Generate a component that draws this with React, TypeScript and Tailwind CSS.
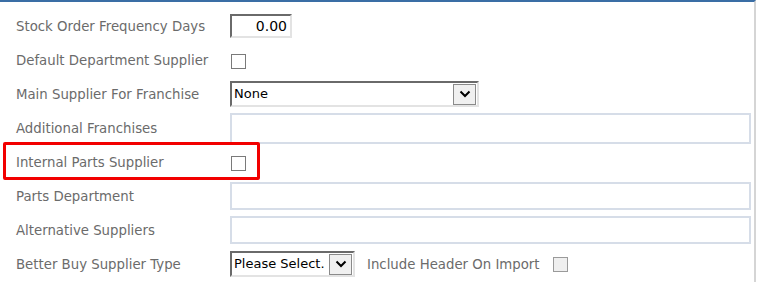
import React from 'react'

const font = { fontFamily: 'Tahoma, "DejaVu Sans", Verdana, sans-serif' }

function Label({ children }: { children: React.ReactNode }) {
    return <div className="w-[214px] shrink-0 pt-[2px] text-[13.3px] text-[#6b6b6b]">{children}</div>
}

function Check({ disabled }: { disabled?: boolean }) {
    return (
        <div className={`w-[15px] h-[15px] border ${disabled ? 'bg-[#efefef] border-[#9a9a9a]' : 'bg-white border-[#7a7a7a]'}`} />
    )
}

function Chevron() {
    return (
        <svg width="12" height="8" viewBox="0 0 12 8">
            <path d="M1.5 1.5 L6 6 L10.5 1.5" fill="none" stroke="#000" strokeWidth="2" />
        </svg>
    )
}

function Select({ value, width }: { value: string; width: string }) {
    return (
        <div className={`${width} h-[26px] flex items-center border-2 border-t-[#6a6a6a] border-l-[#6a6a6a] border-r-[#e3e3e3] border-b-[#e3e3e3] bg-white`}>
            <span className="flex-1 pl-[2px] text-[13px] text-black whitespace-nowrap overflow-hidden">{value}</span>
            <div className="w-[23px] h-[21px] shrink-0 mr-[1px] flex items-center justify-center border border-[#8a8a8a] bg-[#f0f0f0]">
                <Chevron />
            </div>
        </div>
    )
}

function TextBox({ h }: { h: string }) {
    return <div className={`w-[521px] ${h} border-2 border-[#d6dde8] bg-white`} />
}

export default function App() {
    return (
        <div className="w-[762px] h-[282px] bg-white" style={font}>
            <div className="w-[756px] h-[282px] border-t-2 border-t-[#3a6ea5] border-r-2 border-r-[#d5d5d5] pt-[7px] pl-[16px]">
                <div className="h-[34px] flex items-center">
                    <Label>Stock Order Frequency Days</Label>
                    <div className="w-[62px] h-[24px] border-2 border-t-[#6a6a6a] border-l-[#6a6a6a] border-r-[#e3e3e3] border-b-[#e3e3e3] text-right pr-[3px] text-[14px] leading-[20px] text-black">
                        0.00
                    </div>
                </div>
                <div className="h-[34px] flex items-center">
                    <Label>Default Department Supplier</Label>
                    <div className="pt-[3px] pl-[1px]"><Check /></div>
                </div>
                <div className="h-[34px] flex items-center">
                    <Label>Main Supplier For Franchise</Label>
                    <Select value="None" width="w-[249px]" />
                </div>
                <div className="h-[34px] flex items-center">
                    <Label>Additional Franchises</Label>
                    <TextBox h="h-[31px]" />
                </div>
                <div className="relative h-[34px] flex items-center">
                    <div className="absolute left-[-13px] top-[-3px] w-[257px] h-[38px] border-[3px] border-[#f20000] rounded-[2px]" />
                    <Label>Internal Parts Supplier</Label>
                    <div className="pt-[2px] pl-[1px]"><Check /></div>
                </div>
                <div className="h-[34px] flex items-center">
                    <Label>Parts Department</Label>
                    <TextBox h="h-[28px]" />
                </div>
                <div className="h-[34px] flex items-center">
                    <Label>Alternative Suppliers</Label>
                    <TextBox h="h-[28px]" />
                </div>
                <div className="h-[34px] flex items-center">
                    <Label>Better Buy Supplier Type</Label>
                    <Select value="Please Select." width="w-[125px]" />
                    <span className="ml-[12px] pt-[2px] text-[13.3px] text-[#6b6b6b]">Include Header On Import</span>
                    <div className="ml-[13px]"><Check disabled /></div>
                </div>
            </div>
        </div>
    )
}
